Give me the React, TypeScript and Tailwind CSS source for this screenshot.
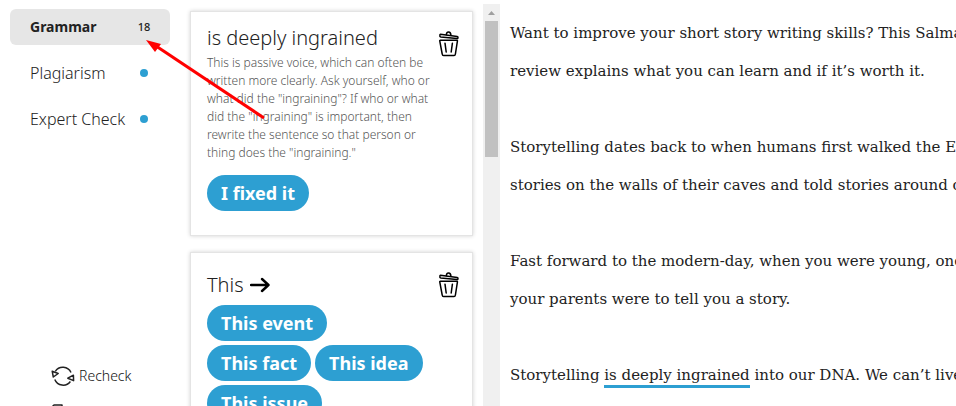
import { useState } from "react";

function TrashIcon() {
  return (
    <svg width="22" height="28" viewBox="0 0 22 28" fill="none" stroke="#000" strokeWidth="1.5" strokeLinecap="round" strokeLinejoin="round" aria-hidden="true">
      <path d="M2.4 4.2 L19.2 6.4 Q20.2 6.6 20 7.8 Q19.9 8.8 19 8.6 L2.8 7 Q1.6 6.8 1.8 5.4 Q1.9 4.2 2.4 4.2Z" />
      <path d="M8.3 4.6 Q8.6 1.8 10.6 1.9 Q12.8 2 12.9 5.1" />
      <path d="M2.4 10.2 H18.8 Q19.6 10.2 19.4 11.2 L17.4 24 Q17.2 25.6 16 25.6 H5.6 Q4.4 25.6 4.2 24 L1.8 11.2 Q1.6 10.2 2.4 10.2 Z" />
      <path d="M7 13.2 L8.2 22 M14.4 13.2 L13.2 22" />
    </svg>
  );
}

function RecheckIcon() {
  return (
    <svg width="24" height="22" viewBox="0 0 24 22" fill="none" stroke="#222" strokeWidth="1.5" strokeLinejoin="round" aria-hidden="true">
      <path d="M4.3 6.3 A9 9 0 0 1 20 7.5" />
      <path d="M3.8 14.5 A9 9 0 0 0 19.4 16.5" />
      <path d="M1.2 6.2 L7.2 8.5 L2.3 12 Z" />
      <path d="M22.4 10.2 L16.8 13.2 L22.6 15.6 Z" />
    </svg>
  );
}

function ExportIcon() {
  return (
    <svg width="14" height="18" viewBox="0 0 14 18" fill="none" stroke="#222" strokeWidth="1.5" strokeLinejoin="round" aria-hidden="true">
      <path d="M1 3 L3 1 H11 V5 L13 7 V17 H1 Z" />
    </svg>
  );
}

function ArrowIcon() {
  return (
    <svg width="20" height="16" viewBox="0 0 20 16" fill="none" stroke="#000" strokeWidth="2.4" strokeLinecap="round" strokeLinejoin="round" aria-hidden="true">
      <path d="M1 8 H18.5 M12 2 L18.5 8 L12 14" />
    </svg>
  );
}

function Pill({ children }: { children: string }) {
  return (
    <button type="button" className="h-9 rounded-full bg-[#2d9fd2] px-3.5 text-lg leading-6 font-bold whitespace-nowrap text-white">
      {children}
    </button>
  );
}

function NavItem({ label, count, active, onSelect }: { label: string; count?: number; active: boolean; onSelect: () => void }) {
  return (
    <button
      type="button"
      onClick={onSelect}
      className={
        active
          ? "flex h-9 items-center rounded-md bg-[#e6e6e6] pl-5 text-left text-sm font-bold text-[#222]"
          : "flex h-9 items-center rounded-md pl-5 text-left text-base font-light text-[#222]"
      }
    >
      <span className="min-w-0 flex-1 whitespace-nowrap">{label}</span>
      <span className="flex w-[52px] shrink-0 justify-center text-[11px] font-medium">
        {count !== undefined ? count : <span className="size-2 rounded-full bg-[#2d9fd2]" />}
      </span>
    </button>
  );
}

const suggestions = ["This event", "This fact", "This idea", "This issue"];
const navItems = [
  { label: "Grammar", count: 18 },
  { label: "Plagiarism" },
  { label: "Expert Check" },
];

export default function App() {
  const [tab, setTab] = useState("Grammar");
  return (
    <div className="relative flex h-screen overflow-hidden bg-white font-['Noto_Sans',sans-serif]">
      <nav className="flex w-[190px] shrink-0 flex-col gap-2.5 pt-[9px] pr-5 pl-2.5">
        {navItems.map((item) => (
          <NavItem key={item.label} {...item} active={tab === item.label} onSelect={() => setTab(item.label)} />
        ))}
        <div className="mt-auto -mb-4 flex flex-col gap-4 pl-[41px]">
          <button type="button" className="flex items-center gap-1 text-sm leading-6 font-light text-[#111]">
            <RecheckIcon />
            Recheck
          </button>
          <button type="button" aria-label="Export" className="flex h-[18px]">
            <ExportIcon />
          </button>
        </div>
      </nav>

      <main className="flex w-[283px] shrink-0 flex-col gap-4 pt-[11px]">
        <article className="flex shrink-0 items-start justify-between border border-[#e4e4e4] pt-3 pr-3 pb-6 pl-4 shadow-[0_0_4px_rgba(0,0,0,0.18)]">
          <div className="min-w-0 flex-1">
            <h2 className="text-xl leading-7 font-light text-[#222]">is deeply ingrained</h2>
            <p className="mt-0.5 text-xs leading-[18px] font-light whitespace-nowrap text-[#555]">
              This is passive voice, which can often be<br />
              written more clearly. Ask yourself, who or<br />
              what did the "ingraining"? If who or what<br />
              did the "ingraining" is important, then<br />
              rewrite the sentence so that person or<br />
              thing does the "ingraining."
            </p>
            <div className="mt-[13px]">
              <Pill>I fixed it</Pill>
            </div>
          </div>
          <button type="button" aria-label="Dismiss" className="mt-1.5">
            <TrashIcon />
          </button>
        </article>

        <article className="flex shrink-0 items-start justify-between border border-[#e4e4e4] pt-[18px] pr-3 pb-6 pl-4 shadow-[0_0_4px_rgba(0,0,0,0.18)]">
          <div className="min-w-0 flex-1">
            <h2 className="flex items-center gap-1.5 text-xl leading-7 font-light text-[#222]">
              This <ArrowIcon />
            </h2>
            <div className="mt-1.5 flex flex-wrap gap-1">
              <div className="w-full">
                <Pill>{suggestions[0]}</Pill>
              </div>
              {suggestions.slice(1).map((s) => (
                <Pill key={s}>{s}</Pill>
              ))}
            </div>
          </div>
          <button type="button" aria-label="Dismiss">
            <TrashIcon />
          </button>
        </article>
      </main>

      <div className="mt-1 ml-2.5 flex w-[17px] shrink-0 flex-col items-center bg-[#f0f0f0]">
        <svg width="17" height="17" viewBox="0 0 17 17" fill="#a0a0a0" aria-hidden="true">
          <path d="M5 11 L8.5 7 L12 11 Z" />
        </svg>
        <div className="h-[136px] w-[13px] bg-[#c1c1c1]" />
      </div>

      <section className="flex min-w-0 flex-1 flex-col gap-[38px] overflow-hidden pt-3.5 pl-2.5 font-['DejaVu_Serif',serif] text-[15px] leading-[38px] whitespace-nowrap text-[#222]">
        <p>
          Want to improve your short story writing skills? This Salma<br />
          review explains what you can learn and if it’s worth it.
        </p>
        <p>
          Storytelling dates back to when humans first walked the Ea<br />
          stories on the walls of their caves and told stories around ca
        </p>
        <p>
          Fast forward to the modern-day, when you were young, one<br />
          your parents were to tell you a story.
        </p>
        <p>
          Storytelling <span className="border-b-3 border-[#2d9fd2] pb-px">is deeply ingrained</span> into our DNA. We can’t live
        </p>
      </section>

      <svg className="pointer-events-none absolute top-9 left-36" width="124" height="86" viewBox="0 0 124 86" aria-hidden="true">
        <path d="M120 82 L12 10" stroke="#ff0000" strokeWidth="3" />
        <path d="M2 4 L17 8 L11 16 Z" fill="#ff0000" />
      </svg>
    </div>
  );
}
